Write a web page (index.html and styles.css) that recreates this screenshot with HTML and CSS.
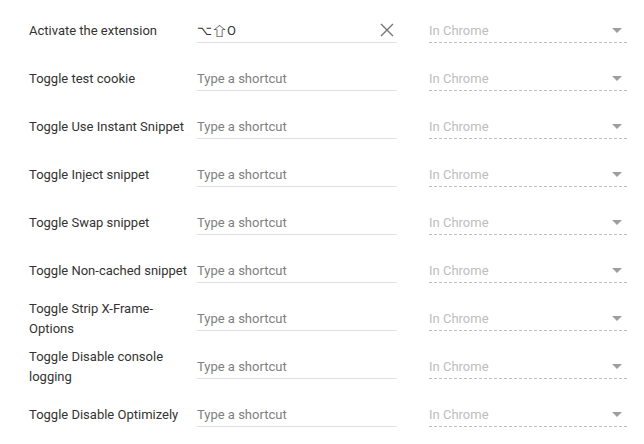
FILE: index.html
```html
<!DOCTYPE html>
<html>
<head>
<meta charset="utf-8">
<link rel="stylesheet" href="styles.css">
</head>
<body>
<div class="list">
  <div class="row">
    <div class="label">Activate the extension</div>
    <div class="shortcut filled"><span class="keys"><span class="opt">⌥</span><span class="shift">⇧</span><span class="key">O</span></span>
      <svg class="clear" width="14" height="14" viewBox="0 0 14 14"><path d="M1 1L13 13M13 1L1 13" stroke="#757575" stroke-width="1.4" fill="none"/></svg>
    </div>
    <div class="scope"><span>In Chrome</span><span class="arrow"></span></div>
  </div>
  <div class="row">
    <div class="label">Toggle test cookie</div>
    <div class="shortcut"><span class="ph">Type a shortcut</span></div>
    <div class="scope"><span>In Chrome</span><span class="arrow"></span></div>
  </div>
  <div class="row">
    <div class="label">Toggle Use Instant Snippet</div>
    <div class="shortcut"><span class="ph">Type a shortcut</span></div>
    <div class="scope"><span>In Chrome</span><span class="arrow"></span></div>
  </div>
  <div class="row">
    <div class="label">Toggle Inject snippet</div>
    <div class="shortcut"><span class="ph">Type a shortcut</span></div>
    <div class="scope"><span>In Chrome</span><span class="arrow"></span></div>
  </div>
  <div class="row">
    <div class="label">Toggle Swap snippet</div>
    <div class="shortcut"><span class="ph">Type a shortcut</span></div>
    <div class="scope"><span>In Chrome</span><span class="arrow"></span></div>
  </div>
  <div class="row">
    <div class="label">Toggle Non-cached snippet</div>
    <div class="shortcut"><span class="ph">Type a shortcut</span></div>
    <div class="scope"><span>In Chrome</span><span class="arrow"></span></div>
  </div>
  <div class="row">
    <div class="label">Toggle Strip X-Frame-Options</div>
    <div class="shortcut"><span class="ph">Type a shortcut</span></div>
    <div class="scope"><span>In Chrome</span><span class="arrow"></span></div>
  </div>
  <div class="row">
    <div class="label">Toggle Disable console logging</div>
    <div class="shortcut"><span class="ph">Type a shortcut</span></div>
    <div class="scope"><span>In Chrome</span><span class="arrow"></span></div>
  </div>
  <div class="row">
    <div class="label">Toggle Disable Optimizely</div>
    <div class="shortcut"><span class="ph">Type a shortcut</span></div>
    <div class="scope"><span>In Chrome</span><span class="arrow"></span></div>
  </div>
</div>
</body>
</html>
```
FILE: styles.css
```css
html, body {
  margin: 0;
  padding: 0;
  background: #ffffff;
}
body {
  font-family: Roboto, "Liberation Sans", sans-serif;
  font-size: 13px;
  color: #333333;
}
.list {
  padding: 6px 0 0 29px;
}
.row {
  display: flex;
  align-items: center;
  height: 48px;
}
.label {
  width: 168px;
  flex: none;
  line-height: 20px;
  padding-top: 2px;
  color: #333333;
}
.shortcut {
  width: 200px;
  height: 24px;
  flex: none;
  display: flex;
  align-items: center;
  justify-content: space-between;
  border-bottom: 1px solid #e0e0e0;
  margin-top: 1px;
}
.ph {
  color: #808080;
}
.keys {
  color: #333333;
  display: flex;
  align-items: center;
}
.opt {
  font-family: "DejaVu Sans", sans-serif;
  font-size: 13px;
}
.shift {
  display: inline-block;
  font-family: "Noto Sans CJK JP", "DejaVu Sans", sans-serif;
  font-size: 13px;
  margin: 0 1px 0 1px;
  transform: scale(1.35, 0.95);
}
.key {
  font-family: Roboto, "Liberation Sans", sans-serif;
  font-size: 13px;
}
.clear {
  margin-right: 3px;
  display: block;
}
.scope {
  width: 199px;
  height: 24px;
  margin-left: 32px;
  margin-top: 1px;
  flex: none;
  display: flex;
  align-items: center;
  justify-content: space-between;
  color: #bdbdbd;
  padding-bottom: 1px;
  background-image: repeating-linear-gradient(to right, #bdbdbd 0, #bdbdbd 3px, transparent 3px, transparent 5px);
  background-size: 100% 1px;
  background-repeat: no-repeat;
  background-position: left bottom;
}
.arrow {
  width: 0;
  height: 0;
  border-left: 5px solid transparent;
  border-right: 5px solid transparent;
  border-top: 5px solid #9e9e9e;
  margin-right: 6px;
}
```
